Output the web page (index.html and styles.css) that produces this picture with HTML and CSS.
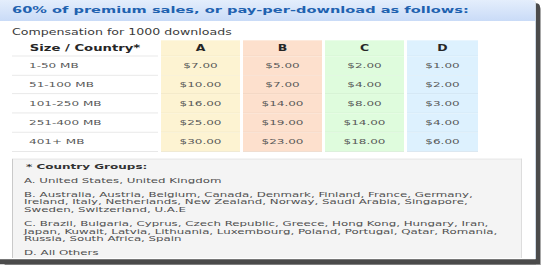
FILE: index.html
```html
<!DOCTYPE html>
<html lang="en">
<head>
<meta charset="utf-8">
<title>Premium sales</title>
<link rel="stylesheet" href="styles.css">
</head>
<body>
<div class="stage">
  <div class="window">
    <div class="titlebar">60% of premium sales, or pay-per-download as follows:</div>
    <div class="content">
      <div class="caption">Compensation for 1000 downloads</div>
      <table class="rates">
        <thead>
          <tr>
            <th class="size">Size / Country*</th>
            <th class="col-a">A</th>
            <th class="col-b">B</th>
            <th class="col-c">C</th>
            <th class="col-d">D</th>
          </tr>
        </thead>
        <tbody>
          <tr><td class="size">1-50 MB</td><td class="col-a">$7.00</td><td class="col-b">$5.00</td><td class="col-c">$2.00</td><td class="col-d">$1.00</td></tr>
          <tr><td class="size">51-100 MB</td><td class="col-a">$10.00</td><td class="col-b">$7.00</td><td class="col-c">$4.00</td><td class="col-d">$2.00</td></tr>
          <tr><td class="size">101-250 MB</td><td class="col-a">$16.00</td><td class="col-b">$14.00</td><td class="col-c">$8.00</td><td class="col-d">$3.00</td></tr>
          <tr><td class="size">251-400 MB</td><td class="col-a">$25.00</td><td class="col-b">$19.00</td><td class="col-c">$14.00</td><td class="col-d">$4.00</td></tr>
          <tr><td class="size">401+ MB</td><td class="col-a">$30.00</td><td class="col-b">$23.00</td><td class="col-c">$18.00</td><td class="col-d">$6.00</td></tr>
        </tbody>
      </table>
      <div class="groups">
        <p class="groups-title">* Country Groups:</p>
        <p>A. United States, United Kingdom</p>
        <p>B. Australia, Austria, Belgium, Canada, Denmark, Finland, France, Germany, Ireland, Italy, Netherlands, New Zealand, Norway, Saudi Arabia, Singapore, Sweden, Switzerland, U.A.E</p>
        <p>C. Brazil, Bulgaria, Cyprus, Czech Republic, Greece, Hong Kong, Hungary, Iran, Japan, Kuwait, Latvia, Lithuania, Luxembourg, Poland, Portugal, Qatar, Romania, Russia, South Africa, Spain</p>
        <p>D. All Others</p>
      </div>
    </div>
  </div>
</div>
</body>
</html>
```
FILE: styles.css
```css
html, body {
  margin: 0;
  padding: 0;
  width: 541px;
  height: 265px;
  overflow: hidden;
  background: #ffffff;
}

.stage {
  width: 541px;
  height: 414px;
  transform: scaleY(0.64);
  transform-origin: 0 0;
  font-family: "DejaVu Sans", Verdana, sans-serif;
}

.window {
  box-sizing: content-box;
  width: 535px;
  height: 405px;
  background: #ffffff;
  border-right: 1px solid #cdd8e4;
  overflow: hidden;
  box-shadow: 4px 5px 0 #4b4b4b, 0 8px 0 #4b4b4b, 4px 8px 0 #4b4b4b, 5px 9px 0 #a8a8a8;
  border-top-right-radius: 4px 6px;
}

.titlebar {
  height: 33px;
  line-height: 31px;
  padding-left: 12px;
  background: linear-gradient(#e4eefc, #c9dbf7);
  color: #1f62b0;
  font-weight: bold;
  font-size: 14.6px;
  white-space: nowrap;
  border-top-right-radius: 4px 6px;
}

.content {
  padding: 0 13px 0 12px;
}

.caption {
  margin-top: 10px;
  line-height: 15px;
  font-size: 12.6px;
  color: #3a3a3a;
  white-space: nowrap;
}

.rates {
  margin: 5px 0 0 -3px;
  border-collapse: separate;
  border-spacing: 3px 0;
  table-layout: fixed;
  width: 472px;
}

.rates th,
.rates td {
  box-sizing: border-box;
  padding: 0;
  text-align: center;
  white-space: nowrap;
  border-bottom: 1px solid rgba(0, 0, 0, 0.07);
}

.rates th {
  line-height: 24px;
  font-size: 12.5px;
  font-weight: bold;
  color: #262626;
}

.rates td {
  line-height: 28.7px;
  font-size: 12px;
  color: #585858;
}

.rates .size {
  width: 146px;
  border-bottom-color: #dcdcdc;
}

.rates th.size {
  font-size: 13.2px;
}

.rates td.size {
  text-align: left;
  padding-left: 17px;
}

.col-a { width: 79px; background: #fdf3d2; }
.col-b { width: 79px; background: #fde0cd; }
.col-c { width: 79px; background: #dffcdd; }
.col-d { width: 71px; background: #ddf1fe; }

.groups {
  box-sizing: border-box;
  margin-top: 11px;
  height: 155px;
  padding: 6px 12px 0 11px;
  background: #f4f4f4;
  border: 1px solid #dddddd;
  border-left-color: #c9c9c9;
  border-bottom: 0;
  font-size: 11.8px;
  color: #4e4e4e;
}

.groups p {
  margin: 0 0 10.7px 0;
  line-height: 11.5px;
}

.groups .groups-title {
  padding-left: 2px;
  font-size: 12px;
  font-weight: bold;
  color: #333333;
}
```
